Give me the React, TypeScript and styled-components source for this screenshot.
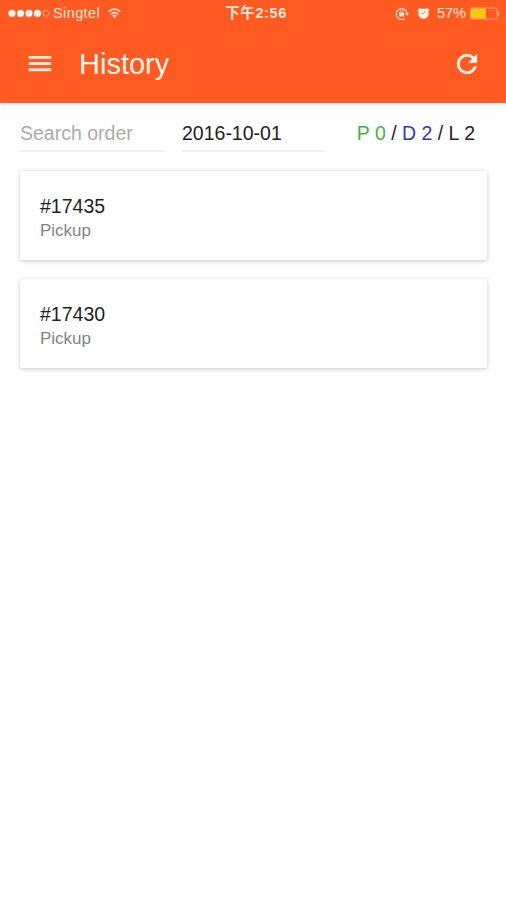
import React from 'react';
import styled, { createGlobalStyle } from 'styled-components';

const GlobalStyle = createGlobalStyle`
  *, *::before, *::after { box-sizing: border-box; }
  body {
    margin: 0;
    background: #fefefe;
    font-family: "Liberation Sans", "Noto Sans CJK SC", sans-serif;
  }
`;

const Screen = styled.div`
  display: flex;
  flex-direction: column;
  width: 506px;
  height: 900px;
  overflow: hidden;
  background: #fefefe;
`;

const Header = styled.header`
  flex: none;
  height: 103px;
  background: #ff5a22;
  color: #fff3ea;
  box-shadow: 0 1px 5px rgba(0, 0, 0, 0.14);
`;

const StatusBar = styled.div`
  display: grid;
  grid-template-columns: 1fr auto 1fr;
  align-items: center;
  height: 27px;
  padding: 0 6px 0 8px;
  font-size: 14px;
  line-height: 27px;
  color: #ffe6d8;
`;

const StatusGroup = styled.div<{ $end?: boolean }>`
  display: flex;
  align-items: center;
  justify-content: ${({ $end }) => ($end ? 'flex-end' : 'flex-start')};
`;

const Carrier = styled.span`
  margin: 0 8px 0 3px;
  font-size: 14.5px;
  letter-spacing: 0.4px;
`;

const Clock = styled.span`
  font-size: 14.5px;
  font-weight: 700;
  letter-spacing: 0.6px;
  padding-left: 4px;
`;

const Percent = styled.span`
  margin: 0 4px 0 7px;
  font-size: 14.5px;
`;

const Gap = styled.span`
  width: 7px;
`;

const Toolbar = styled.div`
  display: flex;
  align-items: center;
  height: 74px;
  padding: 0 24px 0 28px;
`;

const IconButton = styled.button`
  display: flex;
  padding: 0;
  border: 0;
  background: none;
  color: inherit;
`;

const Title = styled.h1`
  flex: 1;
  margin: 0 0 0 27px;
  font-size: 29px;
  font-weight: 400;
  line-height: 36px;
`;

const Filters = styled.div`
  display: flex;
  height: 68px;
  padding: 18px 31px 0 20px;
  gap: 18px;
  font-size: 19.5px;
  line-height: 24px;
`;

const Field = styled.input<{ $width: number }>`
  width: ${({ $width }) => $width}px;
  height: 31px;
  padding: 1px 0 5px;
  border: 0;
  border-bottom: 2px solid #f1f1f1;
  border-radius: 0;
  outline: 0;
  background: transparent;
  font: inherit;
  color: #222;
  &::placeholder { color: #acacac; opacity: 1; }
`;

const Totals = styled.div`
  margin-left: auto;
  font-size: 19.5px;
  white-space: nowrap;
  color: #262626;
`;

const Count = styled.span<{ $color: string }>`
  color: ${({ $color }) => $color};
`;

const Orders = styled.main`
  display: flex;
  flex-direction: column;
  gap: 19px;
  padding: 0 19px 0 20px;
`;

const Card = styled.article`
  height: 89px;
  padding: 23px 20px;
  border-radius: 2px;
  background: #fff;
  box-shadow: 0 1px 4px rgba(0, 0, 0, 0.22);
`;

const OrderNumber = styled.div`
  font-size: 19.5px;
  line-height: 24px;
  color: #1f1f1f;
`;

const OrderKind = styled.div`
  font-size: 17px;
  line-height: 26px;
  color: #848484;
`;

const orders = [
  { number: '#17435', kind: 'Pickup' },
  { number: '#17430', kind: 'Pickup' },
];

const SignalIcon = () => (
  <svg width="42" height="10" viewBox="0 0 42 10" fill="#fff3ea">
    {[4, 12.5, 21, 29.5].map((x) => <circle key={x} cx={x} cy="4.3" r="3.6" />)}
    <circle cx="38" cy="4.3" r="2.9" fill="none" stroke="#ffad88" strokeWidth="1" />
  </svg>
);

const WifiIcon = () => (
  <svg width="13" height="11" viewBox="0 0 13 11" fill="none" stroke="#ffe6d8" strokeWidth="1.7">
    <path d="M.8 3.6Q6.5-1.3 12.2 3.6M3 6.2Q6.5 3.2 10 6.2" />
    <path d="M4.2 7.6Q6.5 6 8.8 7.6L6.5 10.3Z" fill="#ffe6d8" stroke="none" />
  </svg>
);

const RotationLockIcon = () => (
  <svg width="15" height="13" viewBox="0 0 15 13" fill="none" stroke="#ffe0d0">
    <path d="M9.5 11.7A5.4 5.4 0 1 1 12 6.5" strokeWidth="1.2" />
    <path d="M9.8 6.1H14.4L12.1 8.8Z" fill="#ffe0d0" stroke="none" />
    <rect x="4.1" y="5.7" width="5" height="3.8" fill="#ffe0d0" stroke="none" />
    <path d="M5.1 6V4.5Q6.6 2.4 8.1 4.5V6" strokeWidth="1" />
  </svg>
);

const AlarmIcon = () => (
  <svg width="13" height="13" viewBox="0 0 13 13">
    <circle cx="6.5" cy="6.6" r="5.2" fill="#fff0e8" />
    <path d="M1.2 4L4 1.5M9 1.5L11.8 4" stroke="#fff0e8" strokeWidth="2" />
    <path d="M8.2 4L6.5 6.6H4.4" fill="none" stroke="#ff8256" strokeWidth="1" />
  </svg>
);

const BatteryIcon = () => (
  <svg width="30" height="13" viewBox="0 0 30 13">
    <rect x=".5" y="1" width="26.5" height="11" rx="1.5" fill="none" stroke="#ffa17b" />
    <rect x="1" y="1.5" width="15" height="10" rx=".5" fill="#ffc815" />
    <path d="M28 4.2Q30.5 6.5 28 8.8Z" fill="#ffd2bd" />
  </svg>
);

const MenuIcon = () => (
  <svg width="24" height="18" viewBox="0 0 24 18" fill="#fff0e4">
    <path d="M.7 1H23.2V3.8H.7ZM.7 7.2H23.2V10H.7ZM.7 13.4H23.2V16.2H.7Z" />
  </svg>
);

const RefreshIcon = () => (
  <svg width="30" height="30" viewBox="0 0 24 24" fill="#fff3ea" stroke="#fff3ea" strokeWidth="0.3">
    <path d="M17.65 6.35A7.96 7.96 0 0 0 12 4a8 8 0 1 0 7.73 10h-2.08A6 6 0 1 1 12 6c1.66 0 3.14.69 4.22 1.78L13 11h7V4z" />
  </svg>
);

export default function App() {
  return (
    <>
      <GlobalStyle />
      <Screen>
        <Header>
          <StatusBar>
            <StatusGroup>
              <SignalIcon />
              <Carrier>Singtel</Carrier>
              <WifiIcon />
            </StatusGroup>
            <Clock>下午2:56</Clock>
            <StatusGroup $end>
              <RotationLockIcon />
              <Gap />
              <AlarmIcon />
              <Percent>57%</Percent>
              <BatteryIcon />
            </StatusGroup>
          </StatusBar>
          <Toolbar>
            <IconButton aria-label="Menu"><MenuIcon /></IconButton>
            <Title>History</Title>
            <IconButton aria-label="Refresh"><RefreshIcon /></IconButton>
          </Toolbar>
        </Header>
        <Filters>
          <Field $width={144} placeholder="Search order" />
          <Field $width={142} defaultValue="2016-10-01" />
          <Totals>
            <Count $color="#45b34b">P 0</Count> / <Count $color="#3d36ae">D 2</Count> / L 2
          </Totals>
        </Filters>
        <Orders>
          {orders.map((order) => (
            <Card key={order.number}>
              <OrderNumber>{order.number}</OrderNumber>
              <OrderKind>{order.kind}</OrderKind>
            </Card>
          ))}
        </Orders>
      </Screen>
    </>
  );
}
